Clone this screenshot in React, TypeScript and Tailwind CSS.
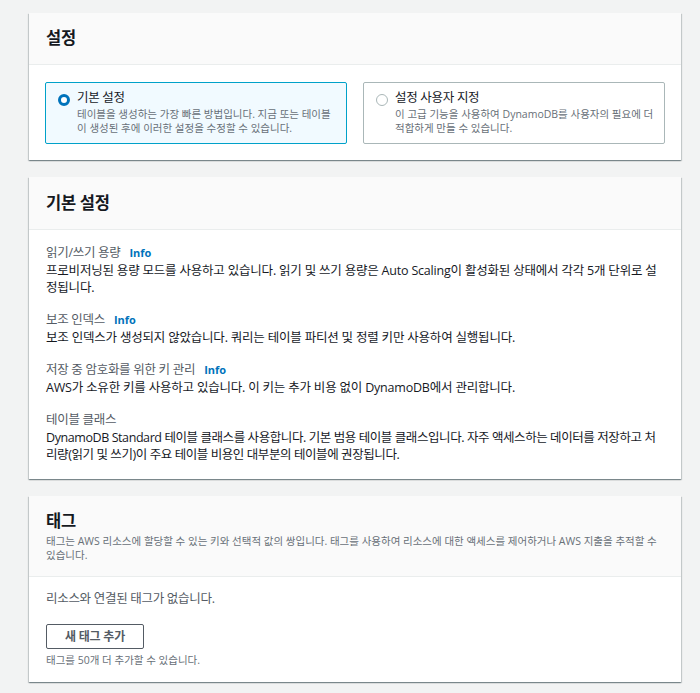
import React, { useState } from "react";

const font = { fontFamily: '"Open Sans", "Noto Sans CJK KR", sans-serif' };

const cardShadow =
  "bg-white shadow-[0_1px_1px_0_rgba(0,28,36,0.3),1px_1px_1px_0_rgba(0,28,36,0.15),-1px_1px_1px_0_rgba(0,28,36,0.15)]";

const Info: React.FC = () => (
  <a className="ml-[9px] text-[11px] font-bold tracking-normal text-[#0073bb] cursor-pointer">Info</a>
);

const RadioTile: React.FC<{
  checked: boolean;
  title: string;
  desc: string;
  onClick: () => void;
}> = ({ checked, title, desc, onClick }) => (
  <div
    onClick={onClick}
    className={`flex-1 flex gap-[7px] pl-[12px] pr-[10px] pt-[6px] pb-[8px] border rounded-[2px] cursor-pointer ${
      checked ? "border-[#00a1c9] bg-[#f1faff]" : "border-[#aab7b8] bg-white"
    }`}
  >
    <div className="pt-[5px]">
      {checked ? (
        <div className="w-[12px] h-[12px] rounded-full border-[3px] border-[#0073bb] bg-white" />
      ) : (
        <div className="w-[12px] h-[12px] rounded-full border border-[#aab7b8] bg-white" />
      )}
    </div>
    <div>
      <div className="text-[12.5px] leading-[18px] tracking-[-0.3px] text-[#16191f]">{title}</div>
      <div className="text-[10.5px] leading-[14px] text-[#687078]">{desc}</div>
    </div>
  </div>
);

const Field: React.FC<{
  label: string;
  info?: boolean;
  tight?: boolean;
  children: React.ReactNode;
}> = ({ label, info, tight, children }) => (
  <div>
    <div className="text-[12.5px] leading-[18px] tracking-[-0.3px] text-[#545b64]">
      {label}
      {info && <Info />}
    </div>
    <div
      className={`text-[12.5px] leading-[17px] text-[#16191f] ${
        tight ? "tracking-[-0.42px]" : "tracking-[-0.2px]"
      }`}
    >
      {children}
    </div>
  </div>
);

export default function App() {
  const [mode, setMode] = useState<"DEFAULT" | "CUSTOM">("DEFAULT");

  return (
    <div className="min-h-screen bg-[#f2f3f3] pt-[13px] pb-[11px] pl-[29px] pr-[19px]" style={font}>
      <div className="flex flex-col gap-[17px]">
        {/* 설정 */}
        <div className={cardShadow}>
          <div className="h-[52px] flex items-center px-[17px] bg-[#fafafa] border-b border-[#eaeded]">
            <h2 className="text-[16.5px] font-bold tracking-[-0.3px] text-[#16191f]">설정</h2>
          </div>
          <div className="flex gap-[16px] px-[16px] pt-[17px] pb-[16px]">
            <RadioTile
              checked={mode === "DEFAULT"}
              onClick={() => setMode("DEFAULT")}
              title="기본 설정"
              desc="테이블을 생성하는 가장 빠른 방법입니다. 지금 또는 테이블이 생성된 후에 이러한 설정을 수정할 수 있습니다."
            />
            <RadioTile
              checked={mode === "CUSTOM"}
              onClick={() => setMode("CUSTOM")}
              title="설정 사용자 지정"
              desc="이 고급 기능을 사용하여 DynamoDB를 사용자의 필요에 더 적합하게 만들 수 있습니다."
            />
          </div>
        </div>

        {/* 기본 설정 */}
        <div className={cardShadow}>
          <div className="h-[53px] flex items-center px-[17px] bg-[#fafafa] border-b border-[#eaeded]">
            <h2 className="text-[16.5px] font-bold tracking-[-0.3px] text-[#16191f]">기본 설정</h2>
          </div>
          <div className="flex flex-col gap-[15px] px-[17px] pt-[14px] pb-[16px]">
            <Field label="읽기/쓰기 용량" info>
              프로비저닝된 용량 모드를 사용하고 있습니다. 읽기 및 쓰기 용량은 Auto Scaling이 활성화된 상태에서 각각 5개 단위로 설정됩니다.
            </Field>
            <Field label="보조 인덱스" info>
              보조 인덱스가 생성되지 않았습니다. 쿼리는 테이블 파티션 및 정렬 키만 사용하여 실행됩니다.
            </Field>
            <Field label="저장 중 암호화를 위한 키 관리" info>
              AWS가 소유한 키를 사용하고 있습니다. 이 키는 추가 비용 없이 DynamoDB에서 관리합니다.
            </Field>
            <Field label="테이블 클래스" tight>
              DynamoDB Standard 테이블 클래스를 사용합니다. 기본 범용 테이블 클래스입니다. 자주 액세스하는 데이터를 저장하고 처리량(읽기 및 쓰기)이 주요 테이블 비용인 대부분의 테이블에 권장됩니다.
            </Field>
          </div>
        </div>

        {/* 태그 */}
        <div className={cardShadow}>
          <div className="px-[17px] pt-[14px] pb-[14px] bg-[#fafafa] border-b border-[#eaeded]">
            <h2 className="text-[16.5px] leading-[22px] font-bold tracking-[-0.3px] text-[#16191f]">태그</h2>
            <p className="mt-[2px] text-[10.5px] leading-[14px] text-[#687078]">
              태그는 AWS 리소스에 할당할 수 있는 키와 선택적 값의 쌍입니다. 태그를 사용하여 리소스에 대한 액세스를 제어하거나 AWS 지출을 추적할 수 있습니다.
            </p>
          </div>
          <div className="px-[17px] pt-[13px] pb-[15px]">
            <p className="text-[12.5px] leading-[18px] tracking-[-0.3px] text-[#545b64]">리소스와 연결된 태그가 없습니다.</p>
            <button className="mt-[16px] w-[98px] h-[25px] border border-[#545b64] rounded-[2px] bg-white text-[12px] font-bold tracking-[-0.2px] text-[#545b64]">
              새 태그 추가
            </button>
            <p className="mt-[4px] text-[10.5px] leading-[14px] text-[#687078]">태그를 50개 더 추가할 수 있습니다.</p>
          </div>
        </div>
      </div>
    </div>
  );
}
